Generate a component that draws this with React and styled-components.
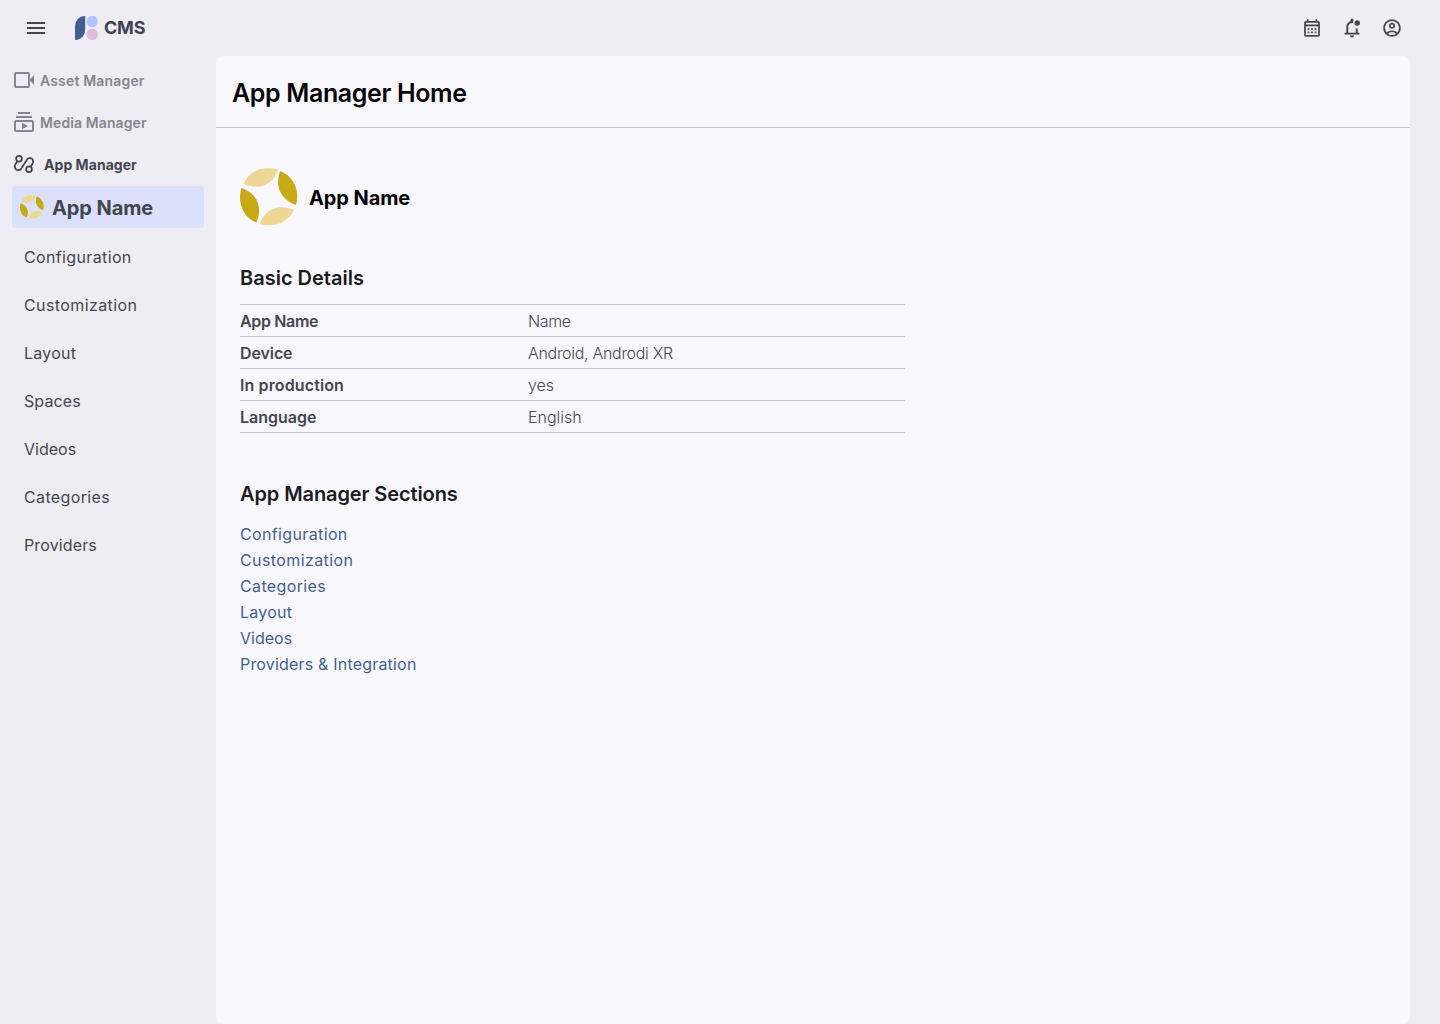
import React from 'react'
import styled, { createGlobalStyle } from 'styled-components'
import { MdMenu, MdOutlineCalendarMonth, MdOutlineAccountCircle, MdOutlineSubscriptions } from 'react-icons/md'

const GlobalStyle = createGlobalStyle`
  * {
    box-sizing: border-box;
  }
  body {
    margin: 0;
    background: #eeedf4;
    color: #44464f;
    font-family: Inter, 'Liberation Sans', sans-serif;
  }
`

const Page = styled.div`
  display: flex;
  flex-direction: column;
  height: 1024px;
  width: 1440px;
`

const TopBar = styled.header`
  display: flex;
  align-items: center;
  height: 56px;
  padding: 0 37px 0 24px;
`

const Brand = styled.div`
  display: flex;
  align-items: center;
  gap: 6px;
  margin-left: 27px;
  color: #3d4256;
  font-size: 18px;
  font-weight: 700;
  letter-spacing: -0.2px;
`

const BrandName = styled.span`
  padding-bottom: 2px;
`

const Actions = styled.div`
  display: flex;
  gap: 18px;
  margin-left: auto;
`

const Columns = styled.div`
  display: flex;
  flex: 1;
`

const Sidebar = styled.nav`
  display: flex;
  flex-direction: column;
  width: 216px;
  padding: 3px 12px 0;
`

const Manager = styled.a`
  display: flex;
  align-items: center;
  gap: ${props => (props.$active ? '8px' : '4px')};
  height: 42px;
  color: ${props => (props.$active ? '#44464f' : '#85868f')};
  font-size: 14px;
  font-weight: ${props => (props.$active ? 700 : 600)};
  letter-spacing: ${props => props.$spacing};
`

const CurrentApp = styled.div`
  display: flex;
  align-items: center;
  gap: 8px;
  height: 42px;
  margin-top: 1px;
  padding: 0 8px;
  border-radius: 4px;
  background: #dce1fb;
  font-size: 20px;
  font-weight: 700;
  letter-spacing: -0.1px;
`

const AppName = styled.span`
  padding-top: 2px;
`

const MenuList = styled.div`
  display: flex;
  flex-direction: column;
  padding: 5px 12px;
`

const MenuItem = styled.a`
  height: 48px;
  font-size: 16px;
  line-height: 48px;
  letter-spacing: ${props => props.$spacing};
`

const Panel = styled.main`
  width: 1194px;
  border-radius: 8px;
  background: #faf8ff;
`

const PanelHeader = styled.div`
  height: 72px;
  padding: 0 16px;
  border-bottom: 1px solid #c5c6d0;
`

const Title = styled.h1`
  margin: 0;
  color: #000;
  font-size: 25px;
  font-weight: 600;
  line-height: 74px;
  letter-spacing: -0.37px;
`

const Content = styled.div`
  padding: 40px 24px;
`

const AppHeading = styled.div`
  display: flex;
  align-items: center;
  gap: 11px;
  height: 58px;
  color: #000;
  font-size: 20px;
  font-weight: 700;
  letter-spacing: -0.1px;
`

const SectionTitle = styled.h2`
  margin: ${props => props.$top} 0 0;
  color: #1a1b20;
  font-size: 20px;
  font-weight: 600;
  line-height: 28px;
  letter-spacing: ${props => props.$spacing};
`

const Details = styled.dl`
  width: 665px;
  margin: 12px 0 0;
  border-top: 1px solid #c5c6d0;
`

const DetailRow = styled.div`
  display: grid;
  grid-template-columns: 288px 1fr;
  height: 32px;
  border-bottom: 1px solid #c5c6d0;
  font-size: 16px;
  line-height: 33px;
`

const Label = styled.dt`
  font-weight: 600;
  letter-spacing: ${props => props.$spacing};
`

const Value = styled.dd`
  margin: 0;
  font-weight: 300;
  letter-spacing: ${props => props.$spacing};
`

const Links = styled.div`
  display: flex;
  flex-direction: column;
  margin-top: 13px;
`

const SectionLink = styled.a`
  color: #445e91;
  font-size: 16px;
  line-height: 26px;
  letter-spacing: ${props => props.$spacing};
`

const menuItems = [
  { name: 'Configuration', spacing: '0.36px' },
  { name: 'Customization', spacing: '0.4px' },
  { name: 'Layout', spacing: '0.25px' },
  { name: 'Spaces', spacing: '0.1px' },
  { name: 'Videos', spacing: '0px' },
  { name: 'Categories', spacing: '0.36px' },
  { name: 'Providers', spacing: '0.13px' }
]

const details = [
  { label: 'App Name', value: 'Name', labelSpacing: '-0.35px', valueSpacing: '-0.4px' },
  { label: 'Device', value: 'Android, Androdi XR', labelSpacing: '-0.1px', valueSpacing: '-0.3px' },
  { label: 'In production', value: 'yes', labelSpacing: '0.12px', valueSpacing: '0px' },
  { label: 'Language', value: 'English', labelSpacing: '0px', valueSpacing: '0px' }
]

const sections = [
  { name: 'Configuration', spacing: '0.36px' },
  { name: 'Customization', spacing: '0.4px' },
  { name: 'Categories', spacing: '0.36px' },
  { name: 'Layout', spacing: '0.25px' },
  { name: 'Videos', spacing: '0px' },
  { name: 'Providers & Integration', spacing: '0.19px' }
]

// the top bar icons sit in a slightly larger box than their 24px grid
const actionBox = '-0.6 -0.6 25.2 25.2'

const BrandMark = () => (
  <svg width="23" height="24" viewBox="0 0 23 24">
    <path d="M0 24V11C0 4.500 4 0 10.200 0V13C10.200 19.500 6 24 0 24Z" fill="#445e91" />
    <circle cx="17.200" cy="5.600" r="5.700" fill="#aec6ff" />
    <circle cx="17.200" cy="18.300" r="5.700" fill="#dfbbdd" />
  </svg>
)

const AppLogo = ({ size }) => (
  <svg width={size} height={size} viewBox="0 0 58 58">
    <path d="M3.300 16C10 2 22-2 38 1.500C33 16 21 23 3.300 16Z" fill="#eed795" />
    <path d="M40.300 3C54 9 60 22 56 37C42 32 34 20 40.300 3Z" fill="#c8aa16" />
    <path d="M54.400 42C47 55 35 60 19.500 56C25 42 37 35 54.400 42Z" fill="#eed795" />
    <path d="M1.300 20C15 24 24 38 16.300 54.500C4 50-3 36 1.300 20Z" fill="#c8aa16" />
  </svg>
)

const CameraIcon = () => (
  <svg width="24" height="24" viewBox="0 0 24 24">
    <rect x="3" y="5" width="14" height="14" rx="1" fill="none" stroke="currentColor" strokeWidth="2" />
    <path d="M17.500 12L22 7V17Z" fill="currentColor" />
  </svg>
)

const FlowIcon = () => (
  <svg width="24" height="24" viewBox="0 0 24 24" fill="none" stroke="currentColor" strokeWidth="1.800">
    <circle cx="7" cy="6.700" r="2.900" />
    <circle cx="17" cy="17.300" r="2.900" />
    <path d="M5.400 9.200L3.800 11.500C1.500 14.800 3.500 18.200 6.300 18.200C7.400 18.200 8.200 17.700 9 16.900L15.400 7.100C16 6.300 16.700 5.800 17.700 5.800C20.500 5.800 22.500 9.200 20.200 12.500L18.600 14.800" />
  </svg>
)

const BellIcon = () => (
  <svg width="22" height="22" viewBox={actionBox}>
    <path d="M3.500 19.500V17.500H5.500V10.500C5.500 7.500 7.500 5 10.300 4.300V3C10.300 1 13.700 1 13.700 3L13 6.200C10 5.700 7.700 8 7.700 10.500V17.500H16.300V12C17 12.500 17.800 12.700 18.500 12.700V17.500H20.500V19.500Z" fill="currentColor" />
    <path d="M9.700 20.500H14.300A2.300 2.300 0 0 1 9.700 20.500Z" fill="currentColor" />
    <circle cx="18" cy="6.300" r="3.100" fill="currentColor" />
  </svg>
)

const App = () => (
  <Page>
    <GlobalStyle />
    <TopBar>
      <MdMenu size={24} />
      <Brand><BrandMark /><BrandName>CMS</BrandName></Brand>
      <Actions>
        <MdOutlineCalendarMonth size={22} viewBox={actionBox} />
        <BellIcon />
        <MdOutlineAccountCircle size={22} viewBox={actionBox} />
      </Actions>
    </TopBar>
    <Columns>
      <Sidebar>
        <Manager $spacing="0.17px"><CameraIcon />Asset Manager</Manager>
        <Manager $spacing="0.1px"><MdOutlineSubscriptions size={24} />Media Manager</Manager>
        <Manager $active $spacing="0.05px"><FlowIcon />App Manager</Manager>
        <CurrentApp><AppLogo size={24} /><AppName>App Name</AppName></CurrentApp>
        <MenuList>
          {menuItems.map(item => <MenuItem key={item.name} $spacing={item.spacing}>{item.name}</MenuItem>)}
        </MenuList>
      </Sidebar>
      <Panel>
        <PanelHeader><Title>App Manager Home</Title></PanelHeader>
        <Content>
          <AppHeading><AppLogo size={58} /><AppName>App Name</AppName></AppHeading>
          <SectionTitle $top="38px" $spacing="0px">Basic Details</SectionTitle>
          <Details>
            {details.map(item => (
              <DetailRow key={item.label}>
                <Label $spacing={item.labelSpacing}>{item.label}</Label>
                <Value $spacing={item.valueSpacing}>{item.value}</Value>
              </DetailRow>
            ))}
          </Details>
          <SectionTitle $top="47px" $spacing="-0.1px">App Manager Sections</SectionTitle>
          <Links>
            {sections.map(item => <SectionLink key={item.name} $spacing={item.spacing}>{item.name}</SectionLink>)}
          </Links>
        </Content>
      </Panel>
    </Columns>
  </Page>
)

export default App
